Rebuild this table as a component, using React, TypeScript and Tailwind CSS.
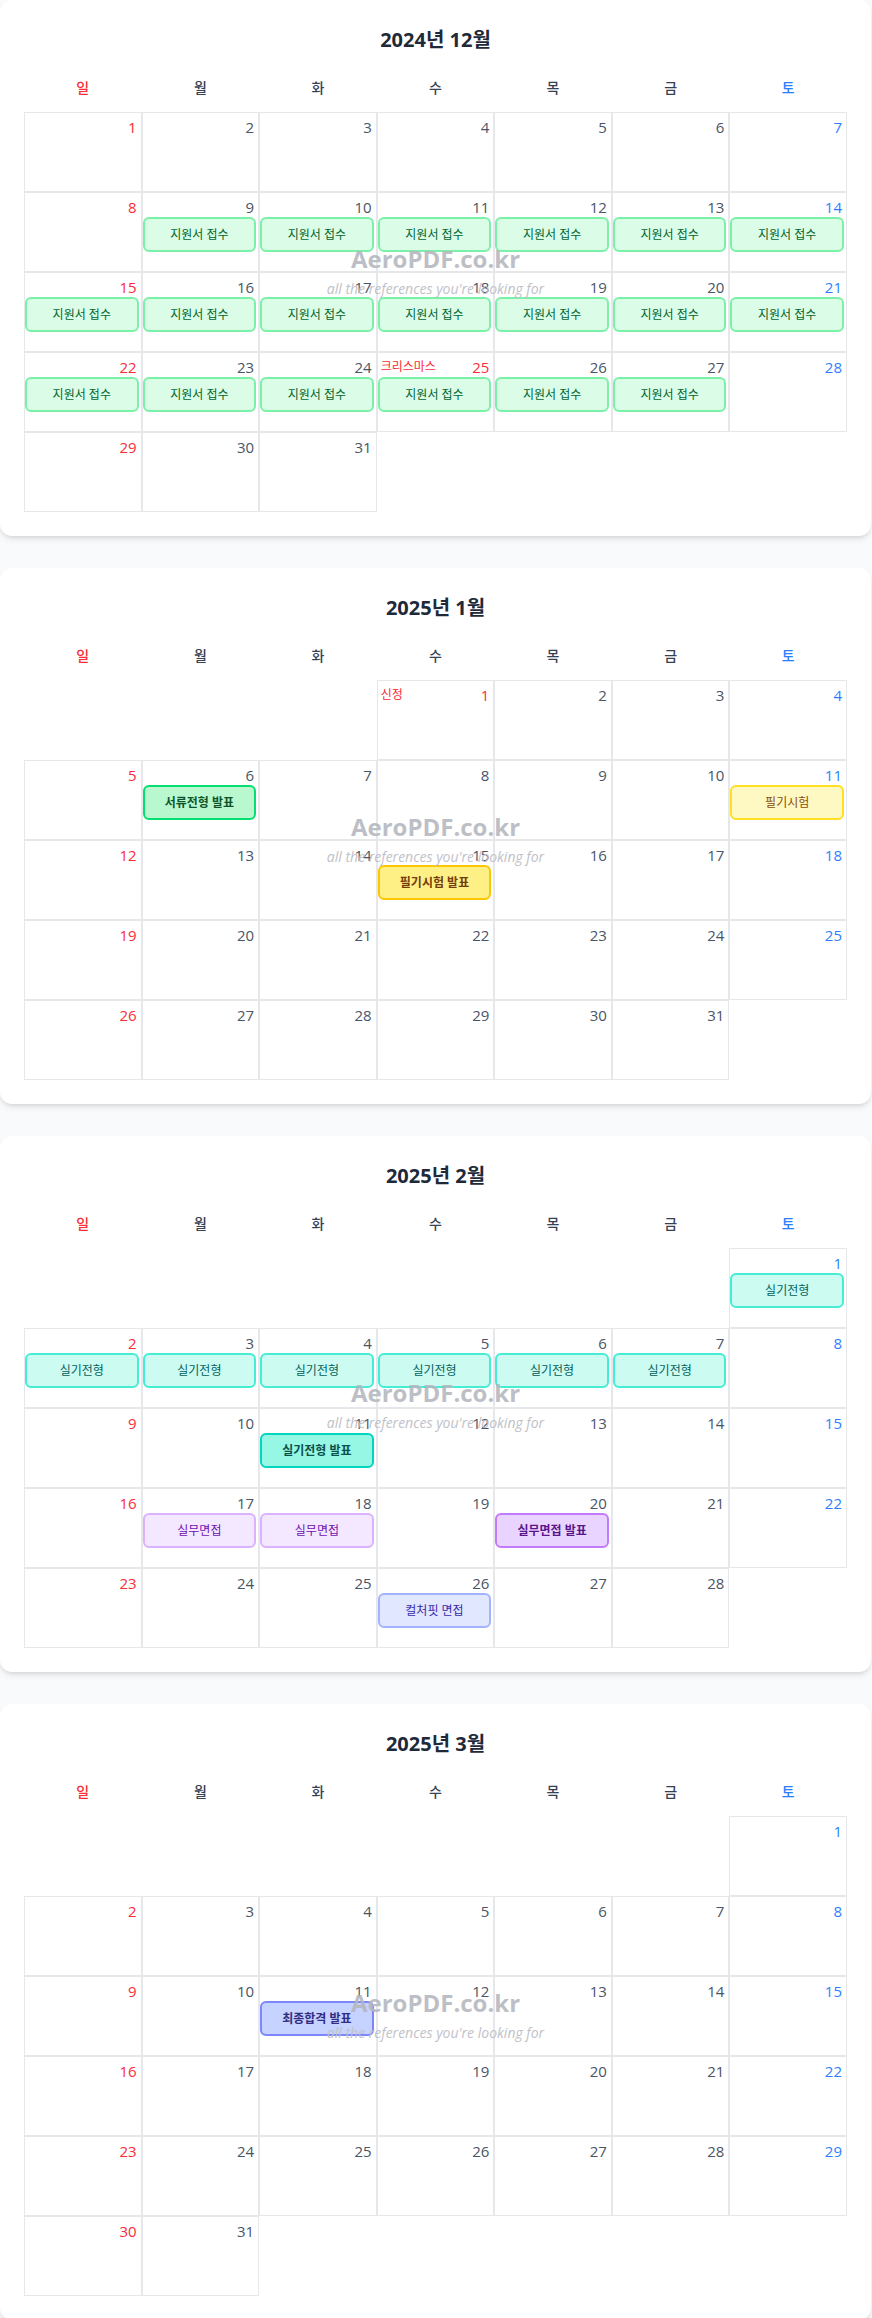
import React from "react";

type EventItem = {
  label: string;
  style: string;
};

type MonthData = {
  title: string;
  year: number;
  month: number; // 0-based
  holidays: Record<number, string>;
  events: Record<number, EventItem>;
};

const styles = {
  apply: "bg-green-100 border-green-300 text-green-800",
  docResult: "bg-green-200 border-green-400 text-green-900 font-semibold",
  written: "bg-yellow-100 border-yellow-300 text-yellow-800",
  writtenResult: "bg-yellow-200 border-yellow-400 text-yellow-900 font-semibold",
  practical: "bg-teal-100 border-teal-300 text-teal-800",
  practicalResult: "bg-teal-200 border-teal-400 text-teal-900 font-semibold",
  interview: "bg-purple-100 border-purple-300 text-purple-800",
  interviewResult: "bg-purple-200 border-purple-400 text-purple-900 font-semibold",
  culture: "bg-indigo-100 border-indigo-300 text-indigo-800",
  final: "bg-indigo-200 border-indigo-400 text-indigo-900 font-semibold",
};

const range = (from: number, to: number, item: EventItem) => {
  const out: Record<number, EventItem> = {};
  for (let d = from; d <= to; d++) out[d] = item;
  return out;
};

const apply: EventItem = { label: "지원서 접수", style: styles.apply };
const practical: EventItem = { label: "실기전형", style: styles.practical };
const interview: EventItem = { label: "실무면접", style: styles.interview };

const months: MonthData[] = [
  {
    title: "2024년 12월",
    year: 2024,
    month: 11,
    holidays: { 25: "크리스마스" },
    events: { ...range(9, 27, apply) },
  },
  {
    title: "2025년 1월",
    year: 2025,
    month: 0,
    holidays: { 1: "신정" },
    events: {
      6: { label: "서류전형 발표", style: styles.docResult },
      11: { label: "필기시험", style: styles.written },
      15: { label: "필기시험 발표", style: styles.writtenResult },
    },
  },
  {
    title: "2025년 2월",
    year: 2025,
    month: 1,
    holidays: {},
    events: {
      ...range(1, 7, practical),
      11: { label: "실기전형 발표", style: styles.practicalResult },
      17: interview,
      18: interview,
      20: { label: "실무면접 발표", style: styles.interviewResult },
      26: { label: "컬처핏 면접", style: styles.culture },
    },
  },
  {
    title: "2025년 3월",
    year: 2025,
    month: 2,
    holidays: {},
    events: {
      11: { label: "최종합격 발표", style: styles.final },
    },
  },
];

const weekdays = ["일", "월", "화", "수", "목", "금", "토"];

const weekdayColor = (i: number) =>
  i === 0 ? "text-red-500" : i === 6 ? "text-blue-500" : "text-gray-700";

const MonthCard = ({ data }: { data: MonthData }) => {
  const first = new Date(data.year, data.month, 1).getDay();
  const total = new Date(data.year, data.month + 1, 0).getDate();
  const cells: (number | null)[] = [];
  for (let i = 0; i < first; i++) cells.push(null);
  for (let d = 1; d <= total; d++) cells.push(d);
  while (cells.length % 7 !== 0) cells.push(null);

  return (
    <div className="w-[871px] rounded-xl bg-white p-6 shadow-md">
      <h2 className="mb-4 h-8 text-center text-xl font-bold leading-8 text-gray-800">
        {data.title}
      </h2>
      <div className="mb-2 grid grid-cols-7">
        {weekdays.map((w, i) => (
          <div
            key={w}
            className={`flex h-8 items-center justify-center text-sm font-medium ${weekdayColor(i)}`}
          >
            {w}
          </div>
        ))}
      </div>
      <div className="grid grid-cols-7">
        {cells.map((day, key) => {
          if (day === null) return <div key={key} className="h-20" />;
          const col = key % 7;
          const holiday = data.holidays[day];
          const ev = data.events[day];
          const numColor =
            col === 0 || holiday
              ? "text-red-500"
              : col === 6
                ? "text-blue-500"
                : "text-gray-600";
          return (
            <div key={key} className="flex h-20 flex-col border border-gray-200">
              <div className="flex h-[24px] items-end justify-between pb-px pl-[3px] pr-1">
                <span className="text-xs leading-[18px] text-red-500">
                  {holiday ?? ""}
                </span>
                <span className={`text-[15px] leading-[18px] ${numColor}`}>
                  {day}
                </span>
              </div>
              {ev && (
                <div
                  className={`mr-0.5 flex h-[35px] items-center justify-center rounded-md border-2 text-xs ${ev.style}`}
                >
                  {ev.label}
                </div>
              )}
            </div>
          );
        })}
      </div>
    </div>
  );
};

const watermarks = [247, 815, 1381, 1991];

export default function App() {
  return (
    <div
      className="relative min-h-screen bg-gray-50"
      style={{ fontFamily: '"Open Sans", "Noto Sans CJK KR", sans-serif' }}
    >
      <div className="flex flex-col gap-8">
        {months.map((m) => (
          <MonthCard key={m.title} data={m} />
        ))}
      </div>

      {watermarks.map((top) => (
        <div
          key={top}
          className="pointer-events-none absolute left-0 flex w-[871px] flex-col items-center"
          style={{ top }}
        >
          <span className="text-2xl font-bold leading-none text-[#b3b6be]/90">
            AeroPDF.co.kr
          </span>
          <span className="mt-[11px] text-sm italic leading-none text-[#bfc1c8]">
            all the references you're looking for
          </span>
        </div>
      ))}
    </div>
  );
}
